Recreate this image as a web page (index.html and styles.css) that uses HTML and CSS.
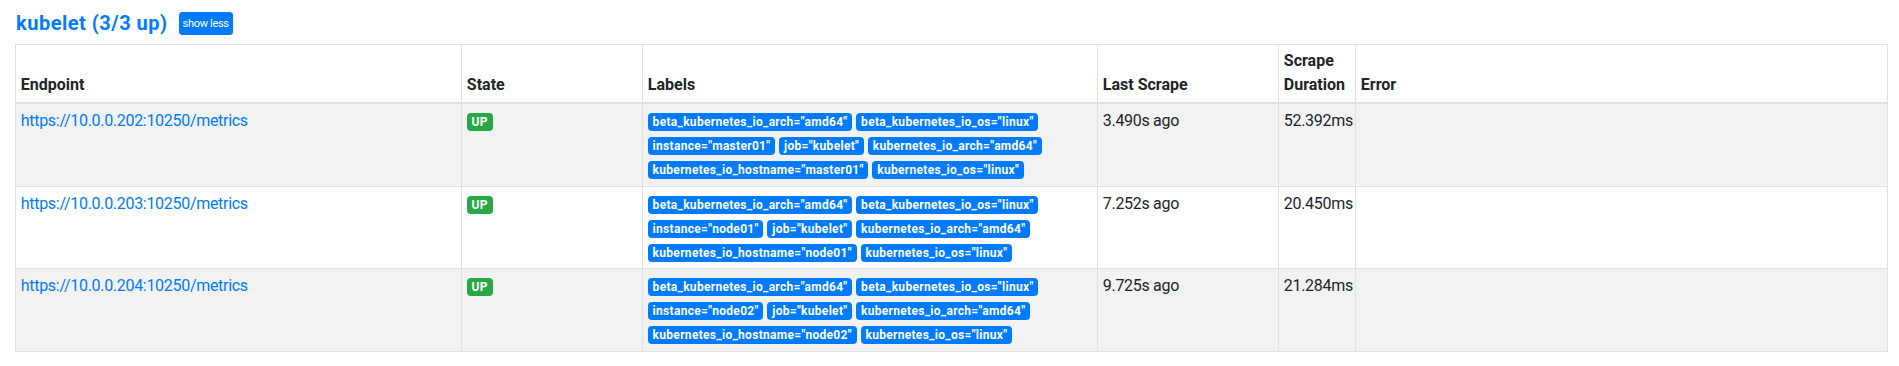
FILE: index.html
```html
<!DOCTYPE html>
<html lang="en">
<head>
<meta charset="utf-8">
<title>Targets</title>
<link rel="stylesheet" href="styles.css">
</head>
<body>
<div class="page">
  <div class="pool-head">
    <a class="pool-name" href="#kubelet">kubelet (3/3 up)</a>
    <button class="btn-xs" type="button">show less</button>
  </div>
  <table class="targets">
    <colgroup>
      <col class="c-endpoint">
      <col class="c-state">
      <col class="c-labels">
      <col class="c-last">
      <col class="c-dur">
      <col class="c-error">
    </colgroup>
    <thead>
      <tr>
        <th>Endpoint</th>
        <th>State</th>
        <th>Labels</th>
        <th>Last Scrape</th>
        <th>Scrape Duration</th>
        <th>Error</th>
      </tr>
    </thead>
    <tbody>
      <tr class="odd">
        <td><a class="endpoint" href="#">https://10.0.0.202:10250/metrics</a></td>
        <td><span class="badge up">UP</span></td>
        <td>
          <div class="labels">
            <div class="label-line"><span class="badge label">beta_kubernetes_io_arch="amd64"</span><span class="badge label">beta_kubernetes_io_os="linux"</span></div>
            <div class="label-line"><span class="badge label">instance="master01"</span><span class="badge label">job="kubelet"</span><span class="badge label">kubernetes_io_arch="amd64"</span></div>
            <div class="label-line"><span class="badge label">kubernetes_io_hostname="master01"</span><span class="badge label">kubernetes_io_os="linux"</span></div>
          </div>
        </td>
        <td>3.490s ago</td>
        <td>52.392ms</td>
        <td></td>
      </tr>
      <tr>
        <td><a class="endpoint" href="#">https://10.0.0.203:10250/metrics</a></td>
        <td><span class="badge up">UP</span></td>
        <td>
          <div class="labels">
            <div class="label-line"><span class="badge label">beta_kubernetes_io_arch="amd64"</span><span class="badge label">beta_kubernetes_io_os="linux"</span></div>
            <div class="label-line"><span class="badge label">instance="node01"</span><span class="badge label">job="kubelet"</span><span class="badge label">kubernetes_io_arch="amd64"</span></div>
            <div class="label-line"><span class="badge label">kubernetes_io_hostname="node01"</span><span class="badge label">kubernetes_io_os="linux"</span></div>
          </div>
        </td>
        <td>7.252s ago</td>
        <td>20.450ms</td>
        <td></td>
      </tr>
      <tr class="odd">
        <td><a class="endpoint" href="#">https://10.0.0.204:10250/metrics</a></td>
        <td><span class="badge up">UP</span></td>
        <td>
          <div class="labels">
            <div class="label-line"><span class="badge label">beta_kubernetes_io_arch="amd64"</span><span class="badge label">beta_kubernetes_io_os="linux"</span></div>
            <div class="label-line"><span class="badge label">instance="node02"</span><span class="badge label">job="kubelet"</span><span class="badge label">kubernetes_io_arch="amd64"</span></div>
            <div class="label-line"><span class="badge label">kubernetes_io_hostname="node02"</span><span class="badge label">kubernetes_io_os="linux"</span></div>
          </div>
        </td>
        <td>9.725s ago</td>
        <td>21.284ms</td>
        <td></td>
      </tr>
    </tbody>
  </table>
</div>
</body>
</html>
```

FILE: styles.css
```css
html, body {
  margin: 0;
  padding: 0;
  background: #fff;
}

body {
  font-family: Roboto, "Liberation Sans", Arial, sans-serif;
  font-size: 16px;
  line-height: 1.5;
  color: #212529;
}

.page {
  padding: 10px 12px 0 15px;
}

.pool-head {
  display: flex;
  align-items: center;
  gap: 11px;
  height: 26px;
  padding-left: 1px;
  margin-bottom: 7.6px;
}

.pool-name {
  font-size: 20px;
  font-weight: 700;
  line-height: 24px;
  letter-spacing: 0.5px;
  color: #007bff;
  text-decoration: none;
}

.btn-xs {
  font-family: inherit;
  font-size: 11px;
  letter-spacing: -0.3px;
  line-height: 17px;
  padding: 2px 3px;
  border: 1px solid #007bff;
  border-radius: 3px;
  background: #007bff;
  color: #fff;
  cursor: pointer;
}

.targets {
  width: 1872px;
  table-layout: fixed;
  border-collapse: collapse;
  border: 1px solid #dee2e6;
}

.c-endpoint { width: 446px; }
.c-state { width: 181px; }
.c-labels { width: 455px; }
.c-last { width: 181px; }
.c-dur { width: 77px; }
.c-error { width: 532px; }

.targets th,
.targets td {
  border: 1px solid #dee2e6;
  padding: 4.8px;
  text-align: left;
}

.targets th {
  vertical-align: bottom;
  font-weight: 700;
  border-bottom: 2px solid #dee2e6;
}

.targets td {
  vertical-align: top;
  letter-spacing: -0.3px;
}

.targets tbody tr.odd {
  background: #f2f2f2;
}

.endpoint {
  color: #007bff;
  text-decoration: none;
}

.badge {
  display: inline-block;
  padding: 3px 4.8px;
  font-size: 12px;
  font-weight: 700;
  line-height: 1;
  letter-spacing: 0.3px;
  color: #fff;
  border-radius: 4px;
  white-space: nowrap;
  vertical-align: baseline;
}

.badge.up {
  background: #28a745;
  margin-top: 4px;
  vertical-align: top;
}

.badge.label {
  background: #007bff;
}

.labels {
  display: flex;
  flex-direction: column;
}

.label-line {
  display: flex;
  gap: 4px;
  height: 24px;
  box-sizing: border-box;
  padding-top: 4px;
  align-items: flex-start;
}
```
